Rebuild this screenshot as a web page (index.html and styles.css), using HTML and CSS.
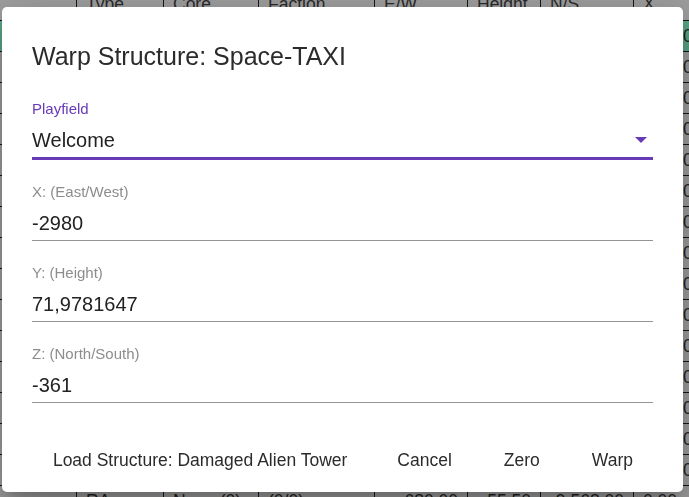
FILE: index.html
```html
<!DOCTYPE html>
<html>
<head>
<meta charset="utf-8">
<link rel="stylesheet" href="styles.css">
</head>
<body>
<div class="sheet">
  <div class="row head"><div class="c"></div><div class="c">Type</div><div class="c">Core</div><div class="c">Faction</div><div class="c">E/W</div><div class="c">Height</div><div class="c">N/S</div><div class="c">X</div></div>
  <div class="row sel"><div class="c"></div><div class="c">BA</div><div class="c">Core (1)</div><div class="c">(0/0)</div><div class="c num">-2980,00</div><div class="c num">71,98</div><div class="c num">-361,00</div><div class="c">-100,00</div></div>
  <div class="row"><div class="c"></div><div class="c">CV</div><div class="c">None (0)</div><div class="c">(0/0)</div><div class="c num">120,00</div><div class="c num">40,50</div><div class="c num">-1,200,00</div><div class="c">-100,00</div></div>
  <div class="row"><div class="c"></div><div class="c">SV</div><div class="c">None (0)</div><div class="c">(0/0)</div><div class="c num">-80,00</div><div class="c num">52,00</div><div class="c num">310,00</div><div class="c">-100,00</div></div>
  <div class="row"><div class="c"></div><div class="c">BA</div><div class="c">None (0)</div><div class="c">(0/0)</div><div class="c num">-1,450,00</div><div class="c num">61,25</div><div class="c num">-2,030,00</div><div class="c">-100,00</div></div>
  <div class="row"><div class="c"></div><div class="c">BA</div><div class="c">None (0)</div><div class="c">(0/0)</div><div class="c num">890,00</div><div class="c num">48,75</div><div class="c num">-4,110,00</div><div class="c">-100,00</div></div>
  <div class="row"><div class="c"></div><div class="c">HV</div><div class="c">None (0)</div><div class="c">(0/0)</div><div class="c num">-330,00</div><div class="c num">57,00</div><div class="c num">-720,00</div><div class="c">-100,00</div></div>
  <div class="row"><div class="c"></div><div class="c">BA</div><div class="c">None (0)</div><div class="c">(0/0)</div><div class="c num">2,040,00</div><div class="c num">44,00</div><div class="c num">-3,300,00</div><div class="c">-100,00</div></div>
  <div class="row"><div class="c"></div><div class="c">BA</div><div class="c">None (0)</div><div class="c">(0/0)</div><div class="c num">-560,00</div><div class="c num">63,50</div><div class="c num">-5,870,00</div><div class="c">-100,00</div></div>
  <div class="row"><div class="c"></div><div class="c">CV</div><div class="c">None (0)</div><div class="c">(0/0)</div><div class="c num">1,180,00</div><div class="c num">39,00</div><div class="c num">-6,420,00</div><div class="c">-100,00</div></div>
  <div class="row"><div class="c"></div><div class="c">BA</div><div class="c">None (0)</div><div class="c">(0/0)</div><div class="c num">-2,210,00</div><div class="c num">58,25</div><div class="c num">-7,050,00</div><div class="c">-100,00</div></div>
  <div class="row"><div class="c"></div><div class="c">BA</div><div class="c">None (0)</div><div class="c">(0/0)</div><div class="c num">430,00</div><div class="c num">50,00</div><div class="c num">-8,160,00</div><div class="c">-100,00</div></div>
  <div class="row"><div class="c"></div><div class="c">SV</div><div class="c">None (0)</div><div class="c">(0/0)</div><div class="c num">-910,00</div><div class="c num">46,50</div><div class="c num">-8,900,00</div><div class="c">-100,00</div></div>
  <div class="row"><div class="c"></div><div class="c">BA</div><div class="c">None (0)</div><div class="c">(0/0)</div><div class="c num">-1,020,00</div><div class="c num">54,00</div><div class="c num">-9,010,00</div><div class="c">-100,00</div></div>
  <div class="row"><div class="c"></div><div class="c">BA</div><div class="c">None (0)</div><div class="c">(0/0)</div><div class="c num">-740,00</div><div class="c num">55,00</div><div class="c num">-9,320,00</div><div class="c">-100,00</div></div>
  <div class="row"><div class="c"></div><div class="c">BA</div><div class="c">None (0)</div><div class="c">(0/0)</div><div class="c num">-700,00</div><div class="c num">55,25</div><div class="c num">-9,440,00</div><div class="c">-100,00</div></div>
  <div class="row"><div class="c"></div><div class="c">RA</div><div class="c">None (0)</div><div class="c">(0/0)</div><div class="c num">-680,00</div><div class="c num">55,50</div><div class="c num">-9,568,00</div><div class="c">0,00</div></div>
</div>

<div class="backdrop">
  <div class="dialog" role="dialog">
    <h2 class="title">Warp Structure: Space-TAXI</h2>
    <div class="content">
      <div class="field focused">
        <div class="label">Playfield</div>
        <div class="input select">
          <span class="value">Welcome</span>
          <svg class="arrow" width="12" height="6" viewBox="0 0 12 6"><path d="M0 0h12L6 6z" fill="#673ab7"/></svg>
        </div>
      </div>
      <div class="field">
        <div class="label">X: (East/West)</div>
        <div class="input"><span class="value">-2980</span></div>
      </div>
      <div class="field">
        <div class="label">Y: (Height)</div>
        <div class="input"><span class="value">71,9781647</span></div>
      </div>
      <div class="field">
        <div class="label">Z: (North/South)</div>
        <div class="input"><span class="value">-361</span></div>
      </div>
    </div>
    <div class="actions">
      <button class="btn">Load Structure: Damaged Alien Tower</button>
      <button class="btn">Cancel</button>
      <button class="btn">Zero</button>
      <button class="btn">Warp</button>
    </div>
  </div>
</div>
</body>
</html>
```

FILE: styles.css
```css
html, body {
  margin: 0;
  padding: 0;
  overflow: hidden;
  background: #9e9e9e;
  font-family: "Liberation Sans", Arial, sans-serif;
}

.sheet {
  margin-top: -11px;
  width: 689px;
  overflow: hidden;
}

.row {
  display: grid;
  grid-template-columns: 77px 87px 95px 116px 93px 73px 93px 106px;
  height: 30px;
  border-bottom: 1px solid #161616;
  font-size: 17.5px;
  color: #1f1f1f;
}

.row.head {
  height: 31px;
  color: #2a2a2a;
}

.row.sel {
  background: #5ca585;
}

.c {
  border-right: 1px solid #161616;
  padding: 0 9px;
  line-height: 30px;
  white-space: nowrap;
  overflow: hidden;
}

.head .c {
  line-height: 31px;
}

.c:last-child {
  border-right: none;
}

.c.num {
  text-align: right;
}

.backdrop {
  position: fixed;
  inset: 0;
  display: flex;
  padding: 7px 6px 5px 2px;
}

.dialog {
  flex: 1;
  display: flex;
  flex-direction: column;
  background: #fff;
  border-radius: 5px;
  box-shadow: 0 11px 15px -7px rgba(0,0,0,.2), 0 24px 38px 3px rgba(0,0,0,.14), 0 9px 46px 8px rgba(0,0,0,.12);
  color: rgba(0,0,0,0.87);
}

.title {
  margin: 0;
  padding: 29px 30px 0;
  font-size: 25px;
  font-weight: 400;
  line-height: 40px;
  color: #2b2b2b;
}

.content {
  padding: 24px 30px 0;
  display: flex;
  flex-direction: column;
  gap: 23px;
}

.field {
  display: flex;
  flex-direction: column;
  border-bottom: 1px solid #949494;
}

.field.focused {
  border-bottom: 3px solid #673ab7;
}

.label {
  font-size: 15px;
  line-height: 18px;
  color: #8d8d8d;
}

.field.focused .label {
  color: #673ab7;
}

.input {
  margin-top: 10px;
  padding-bottom: 5px;
  display: flex;
  align-items: center;
  font-size: 20px;
  line-height: 24px;
  color: #222;
}

.value {
  flex: 1;
}

.arrow {
  margin-right: 6px;
}

.actions {
  margin-top: auto;
  display: flex;
  justify-content: flex-end;
  gap: 10px;
  padding: 0 30px 9px;
}

.btn {
  font-family: "Liberation Sans", Arial, sans-serif;
  font-size: 17.5px;
  line-height: 30.6px;
  padding: 7.5px 20px;
  min-width: 80px;
  border: none;
  background: transparent;
  color: #2b2b2b;
  border-radius: 5px;
  white-space: nowrap;
}
```
